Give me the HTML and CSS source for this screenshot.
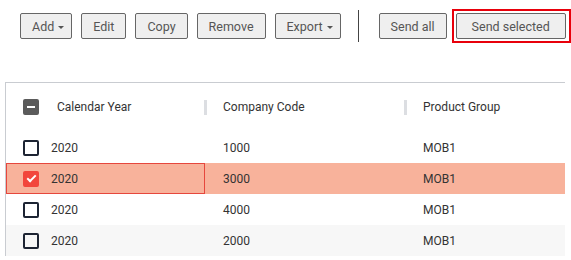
FILE: index.html
```html
<html lang="en">
<head>
    <meta charset="UTF-8">
    <meta name="viewport" content="width=device-width, initial-scale=1.0">
    <title>Records</title>
    <link rel="stylesheet" href="styles.css">
</head>
<body>
    <div class="toolbar">
        <button class="btn btn-menu">Add <span class="caret"></span></button>
        <button class="btn">Edit</button>
        <button class="btn">Copy</button>
        <button class="btn">Remove</button>
        <button class="btn btn-menu">Export <span class="caret"></span></button>
        <div class="divider"></div>
        <button class="btn">Send all</button>
        <span class="focus-ring"><button class="btn btn-wide">Send selected</button></span>
    </div>

    <table class="grid">
        <thead>
            <tr>
                <th class="col-year">
                    <span class="check check-partial"></span>
                    <span class="label">Calendar Year</span>
                </th>
                <th class="col-code"><span class="sep"></span>Company Code</th>
                <th class="col-group"><span class="sep"></span>Product Group</th>
            </tr>
        </thead>
        <tbody>
            <tr>
                <td class="col-year"><span class="check"></span><span class="label">2020</span></td>
                <td>1000</td>
                <td>MOB1</td>
            </tr>
            <tr class="selected">
                <td class="col-year focused"><span class="check check-on"></span><span class="label">2020</span></td>
                <td>3000</td>
                <td>MOB1</td>
            </tr>
            <tr>
                <td class="col-year"><span class="check"></span><span class="label">2020</span></td>
                <td>4000</td>
                <td>MOB1</td>
            </tr>
            <tr class="striped">
                <td class="col-year"><span class="check"></span><span class="label">2020</span></td>
                <td>2000</td>
                <td>MOB1</td>
            </tr>
        </tbody>
    </table>
</body>
</html>
```

FILE: styles.css
```css
body {
    font-family: Roboto, 'Liberation Sans', sans-serif;
    margin: 0;
    background-color: #fff;
    color: #333;
}

.toolbar {
    display: flex;
    align-items: center;
    gap: 9px;
    padding: 13px 0 0 20px;
    height: 26px;
}

.btn {
    flex-shrink: 0;
    white-space: nowrap;
    height: 26px;
    padding: 0 11px;
    background-color: #efefef;
    border: 1px solid #666;
    border-radius: 2px;
    font-family: inherit;
    font-size: 12.5px;
    color: #555;
    display: flex;
    align-items: center;
    gap: 4px;
}

.btn-menu {
    padding: 0 7px 0 11px;
}

.btn-wide {
    padding: 0 15px;
}

.caret {
    width: 0;
    height: 0;
    border-left: 3.5px solid transparent;
    border-right: 3.5px solid transparent;
    border-top: 3.5px solid #555;
    margin-top: 2px;
}

.divider {
    flex-shrink: 0;
    width: 1px;
    height: 32px;
    background-color: #444;
    margin: 0 11px 0 8px;
}

.focus-ring {
    flex-shrink: 0;
    display: flex;
    border: 2px solid #e8000b;
    padding: 2px 3px 2px 2px;
    margin-left: -4px;
}

.grid {
    margin: 43px 0 0 5px;
    width: 560px;
    border-collapse: collapse;
    border-top: 1px solid #c9ccd1;
    border-left: 1px solid #c9ccd1;
    font-size: 12px;
    table-layout: fixed;
}

.grid th {
    height: 49px;
    font-weight: normal;
    text-align: left;
    color: #333;
    padding: 0 0 0 18px;
    position: relative;
}

.grid td {
    height: 31px;
    padding: 1px 0 0 18px;
    color: #333;
}

.grid .col-year {
    width: 182px;
    padding-left: 17px;
}

.grid .col-code {
    width: 182px;
}

.col-year .label {
    vertical-align: middle;
}

th.col-year .label {
    margin-left: 15px;
}

td.col-year .label {
    margin-left: 12px;
}

.sep {
    position: absolute;
    left: -1px;
    top: 17px;
    width: 3px;
    height: 15px;
    background-color: #dcdee2;
}

.check {
    display: inline-block;
    box-sizing: border-box;
    width: 16px;
    height: 16px;
    border: 2px solid #1d2433;
    border-radius: 2px;
    vertical-align: middle;
    position: relative;
}

.check-partial {
    background-color: #5b5b5b;
    border-color: #5b5b5b;
}

.check-partial::after {
    content: "";
    position: absolute;
    left: 2px;
    top: 5px;
    width: 8px;
    height: 2px;
    background-color: #fff;
}

.check-on {
    background-color: #f2463c;
    border-color: #f2463c;
}

.check-on::after {
    content: "";
    position: absolute;
    left: 4px;
    top: 0px;
    width: 3px;
    height: 7px;
    border-right: 2px solid #fff;
    border-bottom: 2px solid #fff;
    transform: rotate(45deg);
}

.selected td {
    background-color: #f8b29b;
}

.selected td.focused {
    outline: 1px solid #e6473d;
    outline-offset: -1px;
}

.striped td {
    background-color: #f7f7f7;
}
```
